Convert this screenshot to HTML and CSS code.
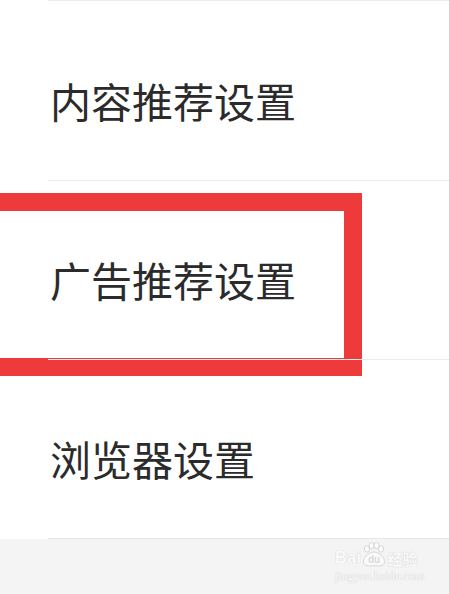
FILE: index.html
```html
<!DOCTYPE html>
<html lang="zh-CN">
<head>
<meta charset="utf-8">
<title>设置</title>
<link rel="stylesheet" href="styles.css">
</head>
<body>
<div class="page">
  <ul class="menu">
    <li class="item">内容推荐设置</li>
    <li class="item item-marked">广告推荐设置<span class="mark"></span></li>
    <li class="item">浏览器设置</li>
  </ul>
  <div class="footer">
    <div class="watermark">
      <div class="wm-top">
        <span class="wm-bai">Bai</span>
        <svg class="wm-paw" width="26" height="26" viewBox="0 0 26 26">
          <ellipse cx="6" cy="7" rx="2.6" ry="3.2" />
          <ellipse cx="10.5" cy="3.6" rx="2.6" ry="3.1" />
          <ellipse cx="15.5" cy="3.6" rx="2.6" ry="3.1" />
          <ellipse cx="20" cy="7" rx="2.6" ry="3.2" />
          <path d="M13 10 C18 10 24 16 23.5 20 C23 24 18 24.5 13 23.5 C8 24.5 3 24 2.5 20 C2 16 8 10 13 10 Z" />
          <text x="13" y="21" text-anchor="middle">du</text>
        </svg>
        <span class="wm-jy">经验</span>
      </div>
      <div class="wm-url">jingyan.baidu.com</div>
    </div>
  </div>
</div>
</body>
</html>
```
FILE: styles.css
```css
html, body {
  margin: 0;
  padding: 0;
  background: #ffffff;
}

.page {
  width: 449px;
  height: 594px;
  display: flex;
  flex-direction: column;
  overflow: hidden;
  font-family: "Noto Sans CJK SC", "Noto Sans", sans-serif;
}

.menu {
  list-style: none;
  margin: 0;
  padding: 0 0 0 48px;
}

.item {
  position: relative;
  box-sizing: border-box;
  height: 180px;
  padding-top: 19px;
  padding-left: 2px;
  border-top: 1px solid #ebebeb;
  display: flex;
  align-items: center;
  font-size: 41px;
  line-height: 41px;
  color: #2b2b2b;
}

.item:last-child {
  border-bottom: 1px solid #e6e6e6;
}

.item-marked {
  height: 179px;
}

.mark {
  position: absolute;
  left: -66px;
  top: 12px;
  width: 380px;
  height: 183px;
  box-sizing: border-box;
  border: 18px solid #ef3a3b;
}

.footer {
  position: relative;
  flex: 1;
  background: #f4f4f4;
}

.watermark {
  position: absolute;
  left: 335px;
  top: 1px;
  display: flex;
  flex-direction: column;
  align-items: flex-start;
}

.wm-top {
  display: flex;
  align-items: flex-end;
  height: 28px;
}

.wm-bai {
  font-family: "Liberation Sans", sans-serif;
  font-weight: bold;
  font-size: 16px;
  line-height: 16px;
  letter-spacing: 0.5px;
  color: #fbfbfb;
  text-shadow: 0 0 1px #d2d2d2, 0 0 1px #d2d2d2;
  margin-bottom: 2px;
}

.wm-paw {
  display: block;
}

.wm-paw ellipse,
.wm-paw path {
  fill: #fbfbfb;
  stroke: #d6d6d6;
  stroke-width: 1;
}

.wm-paw text {
  font-family: "Liberation Sans", sans-serif;
  font-weight: bold;
  font-size: 10px;
  fill: #d8d8d8;
}

.wm-jy {
  font-family: "Noto Sans CJK SC", sans-serif;
  font-weight: bold;
  font-size: 15px;
  line-height: 15px;
  color: #fbfbfb;
  text-shadow: 0 0 1px #cfcfcf, 0 0 1px #cfcfcf;
  margin-bottom: 2px;
}

.wm-url {
  font-family: "Liberation Serif", serif;
  font-size: 12px;
  line-height: 12px;
  margin-top: 2px;
  color: #fbfbfb;
  text-shadow: 0 0 1px #d0d0d0, 0 0 1px #d0d0d0;
}
```
